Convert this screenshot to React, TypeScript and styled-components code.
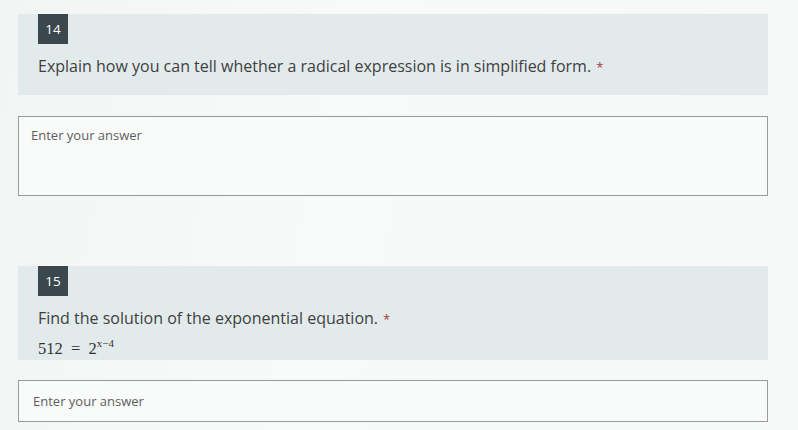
import styled, { createGlobalStyle } from "styled-components";

const GlobalStyle = createGlobalStyle`
  html, body {
    margin: 0;
    padding: 0;
    background: #f6f7f7;
    font-family: "Open Sans", "Noto Sans", sans-serif;
  }
`;

const Page = styled.div`
  width: 798px;
  height: 430px;
  overflow: hidden;
  padding: 14px 30px 0 18px;
  box-sizing: border-box;
  background: linear-gradient(100deg, #f3f5f5 0%, #f8f9f9 40%, #f7f8f8 100%);
`;

const Question = styled.div<{ $gap: number }>`
  margin-bottom: ${({ $gap }) => $gap}px;
`;

const Card = styled.div<{ $pad: number }>`
  background: #e3eaec;
  padding: 0 20px ${({ $pad }) => $pad}px 20px;
`;

const Badge = styled.div`
  width: 30px;
  height: 30px;
  background: #3a484e;
  color: #ffffff;
  font-size: 13.5px;
  display: flex;
  align-items: center;
  justify-content: center;
`;

const Title = styled.div`
  margin-top: 11px;
  font-size: 16px;
  line-height: 22px;
  color: #403f3e;
`;

const Required = styled.span`
  color: #a83a40;
  margin-left: 5px;
  font-size: 13px;
`;

const Equation = styled.div`
  margin-top: 8px;
  font-family: "Liberation Serif", "Times New Roman", serif;
  font-size: 16.5px;
  color: #333;
  line-height: 22px;
  height: 22px;
  white-space: pre;
`;

const Sup = styled.span`
  font-size: 11px;
  line-height: 0;
  vertical-align: 0.6em;
`;

const Answer = styled.div<{ $mt: number; $h: number; $pt: number; $pl: number }>`
  margin-top: ${({ $mt }) => $mt}px;
  height: ${({ $h }) => $h}px;
  box-sizing: border-box;
  border: 1px solid #9a9a9a;
  background: #f9fafa;
  padding: ${({ $pt }) => $pt}px 0 0 ${({ $pl }) => $pl}px;
  font-size: 13px;
  color: #605e5c;
`;

export default function App() {
  return (
    <>
      <GlobalStyle />
      <Page>
        <Question $gap={70}>
          <Card $pad={17}>
            <Badge>14</Badge>
            <Title>
              Explain how you can tell whether a radical expression is in
              simplified form.<Required>*</Required>
            </Title>
          </Card>
          <Answer $mt={21} $h={80} $pt={9} $pl={12}>
            Enter your answer
          </Answer>
        </Question>
        <Question $gap={0}>
          <Card $pad={0}>
            <Badge>15</Badge>
            <Title>
              Find the solution of the exponential equation.
              <Required>*</Required>
            </Title>
            <Equation>
              512  =  2<Sup>x−4</Sup>
            </Equation>
          </Card>
          <Answer $mt={20} $h={42} $pt={11} $pl={14}>
            Enter your answer
          </Answer>
        </Question>
      </Page>
    </>
  );
}
